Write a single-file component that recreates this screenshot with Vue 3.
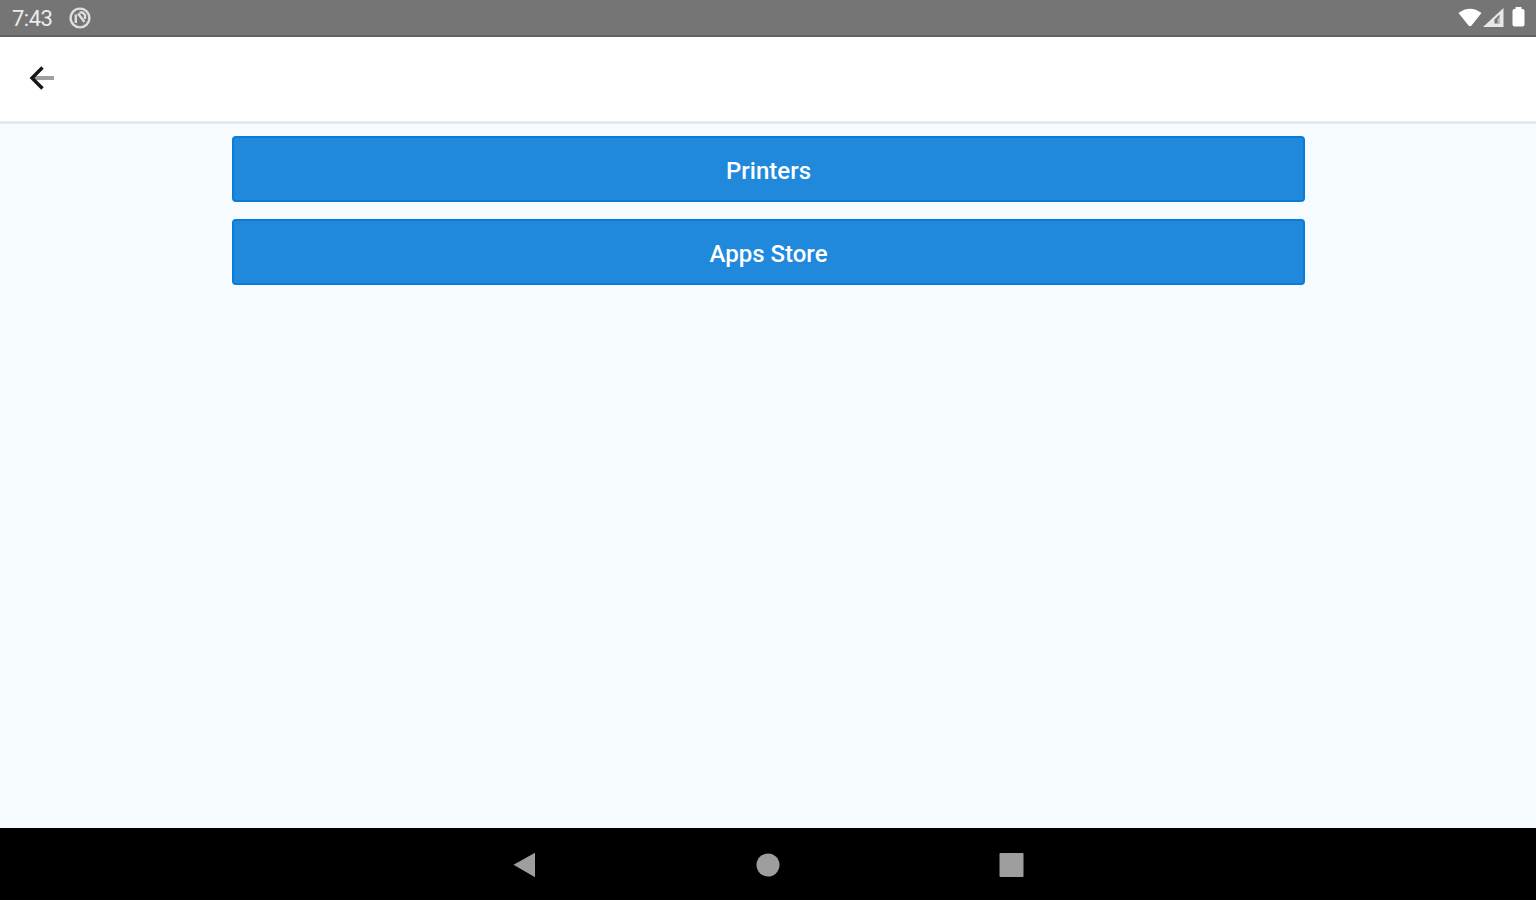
<script setup>
const actions = [
  { key: 'printers', label: 'Printers' },
  { key: 'apps-store', label: 'Apps Store' },
]
</script>

<template>
  <div class="screen">
    <header class="status-bar">
      <div class="status-left">
        <span class="clock">7:43</span>
        <svg class="notification" width="24" height="24" viewBox="0 0 24 24" fill="none" stroke="#dedede">
          <circle cx="12" cy="12" r="9.4" stroke-width="2.4" />
          <path d="M7.8 17V8.5M10 7.5L16.5 16M11.5 6.5H14.5L17 9V13" stroke-width="2.4" />
        </svg>
      </div>
      <svg class="status-icons" width="72" height="24" viewBox="0 0 72 24" fill="#fff">
        <path d="M.5 7Q12 -1.5 23.5 7L13.5 19.5Q12 21 10.5 19.5Z" />
        <path d="M25 21L45.5 2V21Z" fill="#e8e8e8" />
        <path d="M36.5 17.5V13.5L41.5 8.5V17.5Z" fill="#757575" />
        <path d="M39.5 13L42 10.5V17.5H39.5Z" fill="#bcbcbc" />
        <path d="M54.5 5Q54.5 3 56.5 3H57.5V1H63.5V3H64.5Q66.5 3 66.5 5V18.5Q66.5 20.5 64.5 20.5H56.5Q54.5 20.5 54.5 18.5Z" />
      </svg>
    </header>

    <div class="toolbar">
      <button type="button" class="back" aria-label="Back">
        <svg width="28" height="28" viewBox="0 0 28 28" fill="none">
          <path d="M5 14H26" stroke="#a0a0a0" stroke-width="4" />
          <path d="M14.5 3.5L4 14L14.5 24.5" stroke="#161616" stroke-width="3.4" />
        </svg>
      </button>
    </div>

    <main class="content">
      <button v-for="action in actions" :key="action.key" type="button" class="action">
        {{ action.label }}
      </button>
    </main>

    <nav class="nav-bar">
      <svg width="28" height="28" viewBox="0 0 28 28" fill="#9e9e9e">
        <path d="M2.5 13.8L24 1.8V26.2Z" />
      </svg>
      <svg width="28" height="28" viewBox="0 0 28 28" fill="#9e9e9e">
        <circle cx="14" cy="14" r="11.5" />
      </svg>
      <svg width="28" height="28" viewBox="0 0 28 28" fill="#9e9e9e">
        <rect x="2.5" y="2" width="24" height="24" rx="1" />
      </svg>
    </nav>
  </div>
</template>

<style>
body {
  margin: 0;
}
</style>

<style scoped>
.screen {
  display: flex;
  flex-direction: column;

  height: 900px;

  background: #f5fbff;
  font-family: Roboto, "Liberation Sans", sans-serif;
}

svg {
  display: block;
}

.status-bar {
  display: flex;
  justify-content: space-between;
  align-items: center;

  box-sizing: border-box;
  height: 37px;
  padding: 0 6px 0 12px;

  background: #757575;
  border-bottom: 2px solid #626262;
}

.status-left {
  display: flex;
  align-items: center;
  gap: 16px;
}

.clock {
  color: #ececec;
  font-size: 22px;
  letter-spacing: -.5px;
  line-height: 35px;
  padding-top: 2px;
}

.notification {
  margin-top: 1px;
}

.toolbar {
  display: flex;
  align-items: center;

  box-sizing: border-box;
  height: 87px;
  padding: 0 28px 2px;

  background: #fff;
  border-bottom: 3px solid #e1eaec;
}

.back {
  padding: 0;
  border: none;
  background: none;
}

.content {
  display: flex;
  flex: 1;
  flex-direction: column;
  gap: 17px;

  padding: 12px 231px 0 232px;
}

.action {
  height: 66px;
  padding: 4px 0 0;

  border: 2px solid #087cd8;
  border-radius: 4px;

  background: #2189dc;
  color: #fff;
  font-family: inherit;
  font-size: 24px;
  font-weight: 500;
}

.nav-bar {
  display: flex;
  justify-content: center;
  align-items: center;
  gap: 215px;

  box-sizing: border-box;
  height: 72px;
  padding-top: 1px;

  background: #000;
}
</style>
